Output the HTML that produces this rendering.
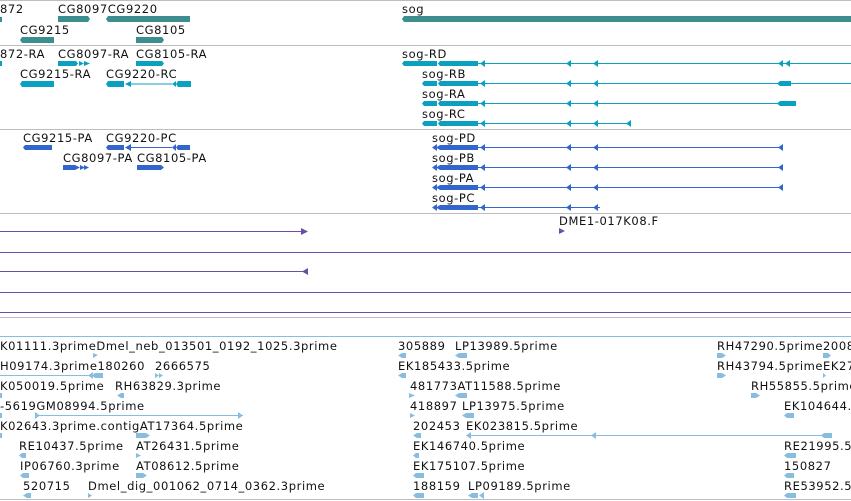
<!DOCTYPE html>
<html><head><meta charset="utf-8"><style>
html,body{margin:0;padding:0;background:#fff;width:851px;height:501px;overflow:hidden}
svg text{font-family:"DejaVu Sans","Liberation Sans",sans-serif;font-size:11.5px;fill:#111;letter-spacing:0.6px}
</style></head><body>
<svg width="851" height="501" viewBox="0 0 851 501" xmlns="http://www.w3.org/2000/svg">
<g fill="#bdbdbd">
<rect x="0" y="0" width="851" height="1"/>
<rect x="0" y="45" width="851" height="1"/>
<rect x="0" y="129" width="851" height="1"/>
<rect x="0" y="213" width="851" height="1"/>
<rect x="0" y="317" width="851" height="1"/>
<rect x="0" y="499" width="851" height="1"/>
</g>
<rect x="0" y="336" width="851" height="1" fill="#88bde0"/>

<g fill="#3d8f8f">
<rect x="0" y="17" width="2" height="5"/>
<polygon points="58,16 88,16 90,19 88,22 58,22"/>
<polygon points="108,16 190,16 190,22 108,22 106,19"/>
<polygon points="404,16 851,16 851,22 404,22 402,19"/>
<polygon points="22,37 54,37 54,43 22,43 20,40"/>
<polygon points="136,37 162,37 164,40 162,43 136,43"/>
</g>
<text x="0" y="13">872</text>
<text x="58" y="13">CG8097CG9220</text>
<text x="402" y="13">sog</text>
<text x="20" y="34">CG9215</text>
<text x="136" y="34">CG8105</text>

<g fill="#0aa0c0">
<rect x="0" y="61" width="2" height="5"/>
<polygon points="58,61 76,61 78,63.5 76,66 58,66"/><polygon points="79,61 84,63.5 79,66"/><polygon points="84,61 90,63.5 84,66"/>
<polygon points="136,61 162,61 164,63.5 162,66 136,66"/>
<polygon points="22,81 54,81 54,87 22,87 20,84"/>
<polygon points="108,81 124,81 124,87 108,87 106,84"/>
<polygon points="125,84 131,81 131,87"/><rect x="131" y="83.5" width="41" height="1"/>
<polygon points="172,84 176,81 176,87"/><polygon points="178,81 191,81 191,87 178,87 176,84"/>
<polygon points="404,61 437,61 437,66 404,66 402,63.5"/>
<polygon points="440,61 478,61 478,66 440,66 438,63.5"/>
<rect x="478" y="63" width="373" height="1"/>
<polygon points="480,63.5 485,60 485,67"/><polygon points="566,63.5 571,60 571,67"/><polygon points="593,63.5 598,60 598,67"/>
<polygon points="778,63.5 783,60 783,67"/><polygon points="785,63.5 790,60 790,67"/>
<polygon points="424,81 437,81 437,86 424,86 422,83.5"/>
<polygon points="440,81 478,81 478,86 440,86 438,83.5"/>
<rect x="478" y="83" width="373" height="1"/>
<polygon points="480,83.5 485,80 485,87"/><polygon points="566,83.5 571,80 571,87"/><polygon points="593,83.5 598,80 598,87"/>
<polygon points="780,81 791,81 791,86 780,86 777,83.5"/>
<polygon points="424,101 437,101 437,106 424,106 422,103.5"/>
<polygon points="440,101 478,101 478,106 440,106 438,103.5"/>
<rect x="478" y="103" width="300" height="1"/>
<polygon points="480,103.5 485,100 485,107"/><polygon points="566,103.5 571,100 571,107"/><polygon points="593,103.5 598,100 598,107"/>
<polygon points="780,101 796,101 796,106 780,106 777,103.5"/>
<polygon points="424,121 437,121 437,126 424,126 422,123.5"/>
<polygon points="440,121 478,121 478,126 440,126 438,123.5"/>
<rect x="478" y="123" width="153" height="1"/>
<polygon points="480,123.5 485,120 485,127"/><polygon points="566,123.5 571,120 571,127"/><polygon points="593,123.5 598,120 598,127"/><polygon points="626,123.5 631,120 631,127"/>
</g>
<text x="0" y="58">872-RA</text>
<text x="58" y="58">CG8097-RA</text>
<text x="136" y="58">CG8105-RA</text>
<text x="20" y="78">CG9215-RA</text>
<text x="106" y="78">CG9220-RC</text>
<text x="402" y="58">sog-RD</text>
<text x="422" y="78">sog-RB</text>
<text x="422" y="98">sog-RA</text>
<text x="422" y="118">sog-RC</text>

<g fill="#3366cc">
<polygon points="25,145 52,145 52,150 25,150 23,147.5"/>
<polygon points="108,145 124,145 124,150 108,150 106,147.5"/>
<polygon points="125,147.5 131,144 131,151"/><rect x="131" y="147" width="41" height="1"/>
<polygon points="172,147.5 176,144 176,151"/><polygon points="178,145 190,145 190,150 178,150 176,147.5"/>
<rect x="63" y="165" width="12" height="5"/><polygon points="75,165 80,167.5 75,170"/><polygon points="80,165 85,167.5 80,170"/><polygon points="84,165 89,167.5 84,170"/>
<polygon points="137,165 161,165 164,167.5 161,170 137,170"/>
<g id="sp">
<polygon points="432,147.5 437,144 437,151"/>
<polygon points="440,145 478,145 478,150 440,150 436,147.5"/>
<polygon points="480,147.5 485,144 485,151"/><polygon points="566,147.5 571,144 571,151"/><polygon points="593,147.5 598,144 598,151"/>
</g>
<rect x="478" y="147" width="305" height="1"/><polygon points="778,147.5 783,144 783,151"/>
<use href="#sp" y="20"/><rect x="478" y="167" width="305" height="1"/><polygon points="778,167.5 783,164 783,171"/>
<use href="#sp" y="40"/><rect x="478" y="187" width="305" height="1"/><polygon points="778,187.5 783,184 783,191"/>
<use href="#sp" y="60"/><rect x="478" y="207" width="122" height="1"/>
</g>
<text x="23" y="142">CG9215-PA</text>
<text x="106" y="142">CG9220-PC</text>
<text x="63" y="162">CG8097-PA</text>
<text x="137" y="162">CG8105-PA</text>
<text x="432" y="142">sog-PD</text>
<text x="432" y="162">sog-PB</text>
<text x="432" y="182">sog-PA</text>
<text x="432" y="202">sog-PC</text>

<g fill="#6a4fa8">
<text x="559" y="225" style="fill:#111">DME1-017K08.F</text>
<polygon points="559,228 565,231 559,234"/>
<rect x="0" y="231" width="303" height="1"/><polygon points="301,228 308,231.5 301,235"/>
<rect x="0" y="252" width="851" height="1"/>
<rect x="0" y="271" width="308" height="1"/><polygon points="302,271.5 308,268 308,275"/>
<rect x="0" y="292" width="851" height="1"/>
<rect x="0" y="312" width="851" height="1"/>
</g>

<g fill="#88bde0">
<polygon points="93,353 98,355 93,358"/>
<rect x="0" y="375" width="90" height="1"/><polygon points="88,375.5 93,372 93,379"/><polygon points="95,373 103,373 103,378 95,378 92,375.5"/>
<polygon points="155,373 159,375.5 155,378"/><polygon points="159,373 163,375.5 159,378"/>
<rect x="0" y="393" width="2" height="5"/>
<polygon points="121,393 124,393 124,398 121,398 117,395.5"/>
<rect x="0" y="413" width="2" height="5"/>
<rect x="36" y="415" width="207" height="1"/><polygon points="35,412 40,415.5 35,419"/><polygon points="238,412 243,415.5 238,419"/>
<rect x="0" y="433" width="2" height="5"/>
<polygon points="136,433 146,433 150,435.5 146,438 136,438"/>
<polygon points="22,453 26,453 26,458 22,458 19,455.5"/>
<polygon points="136,453 141,455.5 136,458"/>
<polygon points="23,473 29,473 29,478 23,478 20,475.5"/>
<polygon points="136,473 143,473 147,475.5 143,478 136,478"/>
<polygon points="27,493 31,493 31,498 27,498 23,495.5"/>
<polygon points="88,493 92,495.5 88,498"/>
<polygon points="402,353 406,353 406,358 402,358 398,355.5"/>
<polygon points="459,353 467,353 467,358 459,358 455,355.5"/>
<polygon points="402,373 406,373 406,378 402,378 398,375.5"/>
<polygon points="409,393 415,395.5 409,398"/>
<polygon points="459,393 467,393 467,398 459,398 455,395.5"/>
<polygon points="410,413 415,415.5 410,418"/>
<polygon points="466,413 474,413 474,418 466,418 462,415.5"/>
<polygon points="417,433 421,433 421,438 417,438 413,435.5"/>
<rect x="468" y="435" width="362" height="1"/><polygon points="466,435.5 471,432 471,439"/><polygon points="591,435.5 596,432 596,439"/><polygon points="824,433 832,433 832,438 824,438 821,435.5"/>
<polygon points="416,453 419,453 419,458 416,458 413,455.5"/>
<polygon points="416,473 424,473 424,478 416,478 413,475.5"/>
<polygon points="416,493 424,493 424,498 416,498 413,495.5"/>
<polygon points="472,493 478,493 478,498 472,498 468,495.5"/><polygon points="479,495.5 484,492 484,499"/>
<polygon points="717,353 722,353 726,355.5 722,358 717,358"/>
<polygon points="823,353 828,353 831,355.5 828,358 823,358"/>
<polygon points="717,373 722,373 726,375.5 722,378 717,378"/>
<polygon points="823,373 826,375.5 823,378"/>
<polygon points="751,393 756,393 760,395.5 756,398 751,398"/>
<polygon points="787,413 794,413 794,418 787,418 784,415.5"/>
<polygon points="787,453 796,453 796,458 787,458 784,455.5"/>
<polygon points="787,473 794,473 794,478 787,478 784,475.5"/>
<polygon points="787,493 796,493 796,498 787,498 784,495.5"/>
</g>
<g>
<text x="0" y="350">K01111.3primeDmel_neb_013501_0192_1025.3prime</text>
<text x="0" y="370">H09174.3prime180260</text><text x="155" y="370">2666575</text>
<text x="0" y="390">K050019.5prime</text><text x="115" y="390">RH63829.3prime</text>
<text x="0" y="410">-5619GM08994.5prime</text>
<text x="0" y="430">K02643.3prime.contigAT17364.5prime</text>
<text x="19" y="450">RE10437.5prime</text><text x="136" y="450">AT26431.5prime</text>
<text x="20" y="470">IP06760.3prime</text><text x="136" y="470">AT08612.5prime</text>
<text x="23" y="490">520715</text><text x="88" y="490">Dmel_dig_001062_0714_0362.3prime</text>
<text x="398" y="350">305889</text><text x="455" y="350">LP13989.5prime</text>
<text x="398" y="370">EK185433.5prime</text>
<text x="410" y="390">481773AT11588.5prime</text>
<text x="410" y="410">418897</text><text x="462" y="410">LP13975.5prime</text>
<text x="413" y="430">202453</text><text x="466" y="430">EK023815.5prime</text>
<text x="413" y="450">EK146740.5prime</text>
<text x="413" y="470">EK175107.5prime</text>
<text x="413" y="490">188159</text><text x="468" y="490">LP09189.5prime</text>
<text x="717" y="350">RH47290.5prime</text><text x="823" y="350">2008</text>
<text x="717" y="370">RH43794.5prime</text><text x="823" y="370">EK27</text>
<text x="751" y="390">RH55855.5prime</text>
<text x="784" y="410">EK104644.</text>
<text x="784" y="450">RE21995.5</text>
<text x="784" y="470">150827</text>
<text x="784" y="490">RE53952.5</text>
</g>
</svg>
</body></html>
